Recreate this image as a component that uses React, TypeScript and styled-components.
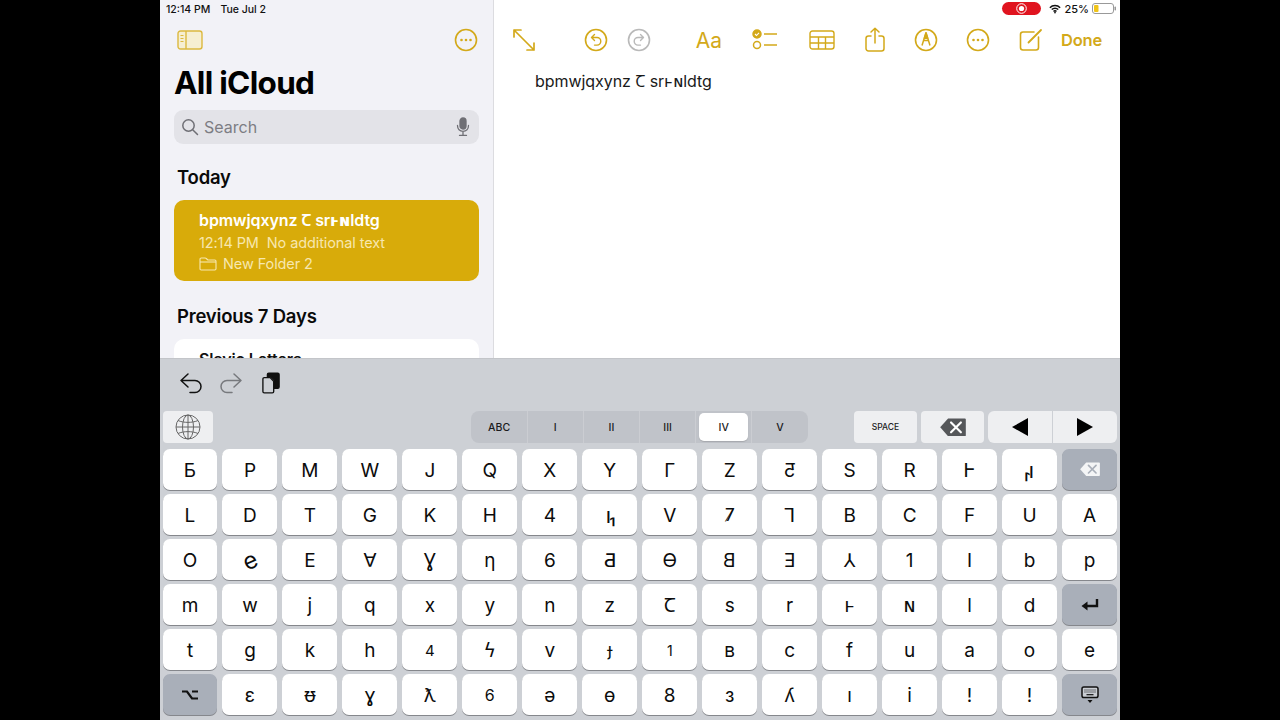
import React from 'react';
import styled, {createGlobalStyle} from 'styled-components';

const GOLD = '#d3a91a';

const GlobalStyle = createGlobalStyle`
  html, body {
    margin: 0;
    padding: 0;
    background: #000;
  }
  body {
    font-family: Inter, "DejaVu Sans", "Noto Sans", sans-serif;
  }
`

const Screen = styled.div`
  width: 960px;
  height: 720px;
  margin: 0 auto;
  display: flex;
  flex-direction: column;
  overflow: hidden;
  background: #fff;
`

const Top = styled.div`
  height: 358px;
  display: flex;
  overflow: hidden;
`

const Sidebar = styled.div`
  width: 305px;
  flex-shrink: 0;
  padding: 0 14px;
  background: #f2f2f7;
  border-right: 1px solid #dcdce0;
`

const StatusLeft = styled.div`
  height: 17px;
  padding-top: 1px;
  box-sizing: border-box;
  margin-left: -8px;
  display: flex;
  gap: 10px;
  align-items: center;
  font-size: 10.5px;
  font-weight: 500;
  color: #111;
`

const SideTools = styled.div`
  height: 30px;
  margin-top: 8px;
  padding: 0 1px 0 3px;
  display: flex;
  align-items: center;
  justify-content: space-between;
`

const Title = styled.h1`
  margin: 9px 0 0 0;
  font-size: 31.5px;
  line-height: 38px;
  font-weight: 700;
  letter-spacing: -0.7px;
  color: #000;
`

const SearchBar = styled.div`
  height: 34px;
  margin-top: 8px;
  padding: 0 9px 0 7px;
  display: flex;
  align-items: center;
  gap: 5px;
  border-radius: 9px;
  background: #e3e3e8;
  color: #7d7d83;
  font-size: 16px;
`

const SearchLabel = styled.span`
  flex: 1;
`

const SectionTitle = styled.h2<{$top: number}>`
  margin: ${p => p.$top}px 0 0 3px;
  font-size: 18.5px;
  line-height: 24px;
  font-weight: 600;
  letter-spacing: -0.2px;
  color: #0a0a0a;
`

const NoteCard = styled.div<{$active?: boolean}>`
  margin-top: 11px;
  padding: 10px 25px 0;
  height: 81px;
  box-sizing: border-box;
  border-radius: 10px;
  background: ${p => (p.$active ? '#d8ab0a' : '#fff')};
  color: ${p => (p.$active ? '#fff' : '#111')};
`

const NoteTitle = styled.div`
  font-size: 16px;
  line-height: 20px;
  font-weight: 600;
  letter-spacing: -0.1px;
  white-space: nowrap;
`

const NoteMeta = styled.div`
  margin-top: 4px;
  display: flex;
  align-items: center;
  font-size: 14.5px;
  line-height: 18px;
  color: #f7e7ae;
  letter-spacing: -0.1px;
`

const FolderLine = styled(NoteMeta)`
  margin-top: 3px;
  gap: 6px;
`

const Editor = styled.div`
  flex: 1;
  background: #fff;
`

const StatusRight = styled.div`
  height: 17px;
  padding-right: 4px;
  display: flex;
  align-items: center;
  justify-content: flex-end;
  font-size: 11px;
  font-weight: 500;
  color: #111;
`

const RecordPill = styled.div`
  width: 39px;
  height: 13px;
  margin-right: 8px;
  display: flex;
  align-items: center;
  justify-content: center;
  border-radius: 7px;
  background: #e0141f;
`

const BatteryLabel = styled.span`
  margin: 0 3px 0 3px;
`

const EditorTools = styled.div`
  height: 30px;
  margin-top: 8px;
  padding-left: 10px;
  display: flex;
  align-items: center;
`

const Tool = styled.div<{$ml: number}>`
  width: 40px;
  height: 30px;
  flex-shrink: 0;
  margin-left: ${p => p.$ml}px;
  display: flex;
  align-items: center;
  justify-content: center;
`

const AaLabel = styled.span`
  font-size: 21px;
  font-weight: 400;
  color: ${GOLD};
`

const DoneLabel = styled.span`
  margin-left: 10px;
  font-size: 16.5px;
  font-weight: 600;
  letter-spacing: -0.2px;
  color: ${GOLD};
`

const NoteBody = styled.div`
  margin: 16px 0 0 41px;
  font-size: 16px;
  line-height: 20px;
  letter-spacing: -0.05px;
  color: #1a1a1a;
  white-space: nowrap;
`

const Flip = styled.span`
  display: inline-block;
  transform: scaleX(-1);
`

const Tilt = styled.span`
  display: inline-block;
  transform: rotate(-24deg);
`

const Tight = styled.span`
  letter-spacing: -2px;
`

const Keyboard = styled.div`
  flex: 1;
  padding: 0 3px 0 2.5px;
  background: #cdd0d5;
  box-shadow: inset 0 1px 0 #c3c5c9;
`

const AccessoryBar = styled.div`
  height: 53px;
  padding: 0 0 4px 16px;
  box-sizing: border-box;
  display: flex;
  align-items: center;
  gap: 16px;
`

const PasteSvg = styled.svg`
  margin-left: 3px;
`

const FunctionRow = styled.div`
  height: 32px;
  display: flex;
  align-items: stretch;
`

const FnKey = styled.div<{$w: number}>`
  width: ${p => p.$w}px;
  display: flex;
  align-items: center;
  justify-content: center;
  border-radius: 4px;
  background: #eeeff1;
  font-size: 8.5px;
  font-weight: 500;
  color: #222;
`

const Segmented = styled.div`
  width: 337px;
  margin-left: 258px;
  display: grid;
  grid-template-columns: repeat(6, 1fr);
  border-radius: 8px;
  background: #c0c3c9;
`

const SegmentCell = styled.div<{$first?: boolean}>`
  display: flex;
  padding: 2px 3px;
  border-left: 1px solid ${p => (p.$first ? 'transparent' : '#cbcdd2')};
`

const Segment = styled.div<{$selected?: boolean}>`
  flex: 1;
  display: flex;
  align-items: center;
  justify-content: center;
  border-radius: 5px;
  font-size: 10.5px;
  font-weight: 500;
  color: #1b1b1d;
  background: ${p => (p.$selected ? '#fff' : 'transparent')};
  box-shadow: ${p => (p.$selected ? '0 1px 1px #a6a8ad' : 'none')};
`

const SpaceGroup = styled.div`
  margin-left: auto;
  display: flex;
  gap: 4px;
`

const ArrowPair = styled.div`
  width: 129px;
  display: grid;
  grid-template-columns: 1fr 1fr;
  gap: 1px;
  border-radius: 6px;
  overflow: hidden;
  background: #cdd0d5;
`

const ArrowKey = styled.div`
  display: flex;
  align-items: center;
  justify-content: center;
  background: #eeeff1;
`

const KeyGrid = styled.div`
  margin-top: 6px;
  display: grid;
  grid-template-columns: repeat(16, 1fr);
  grid-auto-rows: 41px;
  gap: 4px 5px;
`

const Key = styled.div<{$dark?: boolean; $size?: number}>`
  padding-top: ${p => (p.$dark ? 0 : 1)}px;
  box-sizing: border-box;
  display: flex;
  align-items: center;
  justify-content: center;
  border-radius: 7px;
  font-size: ${p => p.$size || 19}px;
  color: #0c0c0c;
  background: ${p => (p.$dark ? '#a9afb9' : '#fff')};
  box-shadow: 0 1px 0 #85878c;
`

const Ellipsis = ({color = GOLD}: {color?: string}) => (
    <svg width="24" height="24" viewBox="0 0 24 24">
        <circle cx="12" cy="12" r="10.5" fill="none" stroke={color} strokeWidth="1.6"/>
        <circle cx="7.5" cy="12" r="1.3" fill={color}/>
        <circle cx="12" cy="12" r="1.3" fill={color}/>
        <circle cx="16.5" cy="12" r="1.3" fill={color}/>
    </svg>
)

const SidebarIcon = () => (
    <svg width="26" height="20" viewBox="0 0 26 20" fill="none" stroke="#dcb93f" strokeWidth="1.4">
        <rect x="1" y="1" width="24" height="18" rx="2.5" fill="#f6efd2"/>
        <path d="M9 1v18" />
        <path d="M3.5 5.5h3M3.5 8.5h3M3.5 11.5h3" strokeWidth="1.1"/>
    </svg>
)

const SearchIcon = () => (
    <svg width="18" height="18" viewBox="0 0 18 18" fill="none" stroke="#6f6f75" strokeWidth="1.5">
        <circle cx="7.5" cy="7.5" r="5.7"/>
        <path d="M11.7 11.7L16.5 16.5" strokeLinecap="round"/>
    </svg>
)

const MicIcon = () => (
    <svg width="14" height="20" viewBox="0 0 14 20" fill="none" stroke="#6f6f75" strokeWidth="1.3">
        <rect x="4" y="1" width="6" height="11" rx="3" fill="#6f6f75"/>
        <path d="M1.5 8.5c0 3.5 2.3 5.8 5.5 5.8s5.5-2.3 5.5-5.8M7 14.3V18M3.5 18.4h7" strokeLinecap="round"/>
    </svg>
)

const FolderIcon = () => (
    <svg width="18" height="14" viewBox="0 0 18 14" fill="none" stroke="#f7e7ae" strokeWidth="1.1">
        <path d="M1 3V2.2C1 1.5 1.5 1 2.2 1h4c.5 0 .8.2 1.1.5l1 1c.3.3.6.5 1 .5h6.5C16.5 3 17 3.5 17 4.2v7.6c0 .7-.5 1.2-1.2 1.2H2.2C1.5 13 1 12.5 1 11.8V3z"/>
        <path d="M1 5h16"/>
    </svg>
)

const ExpandIcon = () => (
    <svg width="24" height="24" viewBox="0 0 24 24" fill="none" stroke={GOLD} strokeWidth="1.7" strokeLinecap="round" strokeLinejoin="round">
        <path d="M2 9V2h7M2 2l20 20M22 15v7h-7"/>
    </svg>
)

const CircleArrow = ({color, redo}: {color: string; redo?: boolean}) => (
    <svg width="24" height="24" viewBox="0 0 24 24" fill="none" stroke={color} strokeWidth="1.6" strokeLinecap="round" strokeLinejoin="round">
        <circle cx="12" cy="12" r="10.5"/>
        <g transform={redo ? 'matrix(-1 0 0 1 24 0)' : undefined}>
            <path d="M10.5 6.5L7.5 9.5l3 3M7.5 9.5h5.5a3.8 3.8 0 0 1 0 7.6h-2.5" strokeWidth="1.4"/>
        </g>
    </svg>
)

const ChecklistIcon = () => (
    <svg width="26" height="22" viewBox="0 0 26 22" fill="none" stroke={GOLD} strokeWidth="1.5">
        <circle cx="5" cy="5" r="4" fill={GOLD}/>
        <path d="M3 5l1.5 1.5L7 3.8" stroke="#fff" strokeWidth="1.1"/>
        <circle cx="5" cy="16" r="3.5"/>
        <path d="M12 5h13M12 16h13"/>
    </svg>
)

const TableIcon = () => (
    <svg width="26" height="20" viewBox="0 0 26 20" fill="none" stroke={GOLD} strokeWidth="1.4">
        <rect x="1" y="1" width="24" height="18" rx="2.5"/>
        <path d="M1 7h24M1 13h24M9.5 7v12M16.5 7v12"/>
    </svg>
)

const ShareIcon = () => (
    <svg width="20" height="26" viewBox="0 0 20 26" fill="none" stroke={GOLD} strokeWidth="1.5" strokeLinecap="round" strokeLinejoin="round">
        <path d="M6 9H3.5A2.5 2.5 0 0 0 1 11.5v10A2.5 2.5 0 0 0 3.5 24h13a2.5 2.5 0 0 0 2.5-2.5v-10A2.5 2.5 0 0 0 16.5 9H14"/>
        <path d="M10 16V1.5M6 5l4-3.8L14 5"/>
    </svg>
)

const PenIcon = () => (
    <svg width="24" height="24" viewBox="0 0 24 24" fill="none" stroke={GOLD} strokeWidth="1.6" strokeLinejoin="round">
        <circle cx="12" cy="12" r="10.5"/>
        <path d="M12 4.5L8 17.5M12 4.5l4 13M9.5 12.5h5" strokeWidth="1.5"/>
        <path d="M12 4.5l-2 6h4z" fill={GOLD} strokeWidth="1"/>
    </svg>
)

const ComposeIcon = () => (
    <svg width="24" height="24" viewBox="0 0 24 24" fill="none" stroke={GOLD} strokeWidth="1.6" strokeLinecap="round">
        <path d="M15 4H4a2.5 2.5 0 0 0-2.5 2.5v13A2.5 2.5 0 0 0 4 22h13a2.5 2.5 0 0 0 2.5-2.5V9"/>
        <path d="M9.5 14.5L22 2" strokeWidth="1.8"/>
    </svg>
)

const WifiIcon = () => (
    <svg width="12" height="10" viewBox="0 0 14 11" fill="none" stroke="#111" strokeWidth="1.7">
        <path d="M1 4a8.5 8.5 0 0 1 12 0M3.2 6.2a5.3 5.3 0 0 1 7.6 0M5.3 8.3a2.3 2.3 0 0 1 3.4 0"/>
        <circle cx="7" cy="9.7" r="1" fill="#111" stroke="none"/>
    </svg>
)

const BatteryIcon = () => (
    <svg width="24" height="11" viewBox="0 0 24 11">
        <rect x="0.5" y="0.5" width="21" height="10" rx="2.5" fill="none" stroke="#999"/>
        <rect x="2" y="2" width="4.5" height="7" rx="1" fill="#f0c419"/>
        <rect x="22.5" y="3.5" width="1.5" height="4" rx="0.7" fill="#999"/>
    </svg>
)

const RecordIcon = () => (
    <svg width="11" height="11" viewBox="0 0 11 11">
        <circle cx="5.5" cy="5.5" r="4.8" fill="none" stroke="#fff" strokeWidth="1"/>
        <circle cx="5.5" cy="5.5" r="2.6" fill="#fff"/>
    </svg>
)

const BarUndo = ({color, redo}: {color: string; redo?: boolean}) => (
    <svg width="24" height="22" viewBox="0 0 24 22" fill="none" stroke={color} strokeWidth="1.5" strokeLinecap="round" strokeLinejoin="round">
        <g transform={redo ? 'matrix(-1 0 0 1 24 0)' : undefined}>
            <path d="M9 2L2 8.5 9 15M2 8.5h14a6 6 0 0 1 0 12h-5"/>
        </g>
    </svg>
)

const PasteIcon = () => (
    <PasteSvg width="18" height="22" viewBox="0 0 20 24" fill="none" stroke="#111" strokeWidth="1.5" strokeLinejoin="round">
        <path d="M6 2.5A1.5 1.5 0 0 1 7.5 1h10A1.5 1.5 0 0 1 19 2.5v14a1.5 1.5 0 0 1-1.5 1.5H14V9l-4-4H6z" fill="#111"/>
        <path d="M2.5 6H9l4 4v11.5a1.5 1.5 0 0 1-1.5 1.5h-9A1.5 1.5 0 0 1 1 21.5v-14A1.5 1.5 0 0 1 2.5 6z" fill="#cdd0d5"/>
    </PasteSvg>
)

const GlobeIcon = () => (
    <svg width="26" height="26" viewBox="0 0 26 26" fill="none" stroke="#666" strokeWidth="1">
        <circle cx="13" cy="13" r="12"/>
        <ellipse cx="13" cy="13" rx="5.5" ry="12"/>
        <path d="M13 1v24M1 13h24M3 6.5c5.5 2.5 14.5 2.5 20 0M3 19.5c5.5-2.5 14.5-2.5 20 0"/>
    </svg>
)

const DeleteIcon = ({fill, cross, width}: {fill: string; cross: string; width: number}) => (
    <svg width={width} height={width * 0.72} viewBox="0 0 26 19">
        <path d="M8 0.5h17a1 1 0 0 1 1 1v16a1 1 0 0 1-1 1H8L0 9.5z" fill={fill}/>
        <path d="M11 4.5l10 10M21 4.5l-10 10" stroke={cross} strokeWidth="2.2" strokeLinecap="round"/>
    </svg>
)

const Triangle = ({left}: {left?: boolean}) => (
    <svg width="16" height="18" viewBox="0 0 16 18">
        <path d={left ? 'M16 0v18L0 9z' : 'M0 0v18l16-9z'} fill="#000"/>
    </svg>
)

const ReturnIcon = () => (
    <svg width="18" height="12" viewBox="0 0 18 12" fill="none" stroke="#111" strokeWidth="2.4">
        <path d="M16 0v7H5"/>
        <path d="M0.5 7L6.5 2.5v9z" fill="#111" stroke="none"/>
    </svg>
)

const OptionIcon = () => (
    <svg width="16" height="10" viewBox="0 0 16 10" fill="none" stroke="#111" strokeWidth="2.2">
        <path d="M0 1.5h5l5 7h6M10 1.5h6"/>
    </svg>
)

const HideKeyboardIcon = () => (
    <svg width="18" height="18" viewBox="0 0 18 18" fill="none" stroke="#111" strokeWidth="1.5">
        <rect x="1" y="1" width="16" height="10.5" rx="1.8" fill="#c9cdd3"/>
        <path d="M3.5 4h11M3.5 6h11" strokeDasharray="1 1" strokeWidth="1.2"/>
        <path d="M5.5 8.7h7" strokeWidth="1.2"/>
        <path d="M6.5 14h5L9 17z" fill="#111" stroke="none"/>
    </svg>
)

type KeyDef = React.ReactNode | {node: React.ReactNode; size: number} | {icon: React.ReactNode}

const STEP_UP = <Tight>ı₁</Tight>

const KEYS: KeyDef[] = [
    'Б', 'P', 'M', 'W', 'J', 'Q', 'X', 'Y', 'Γ', 'Z', <Flip>Ƽ</Flip>, 'S', 'R', 'Ⱶ', {node: <Flip>{STEP_UP}</Flip>, size: 22},
    {icon: <DeleteIcon fill="#f4f5f6" cross="#a9afb9" width={20}/>},
    'L', 'D', 'T', 'G', 'K', 'H', '4', {node: STEP_UP, size: 22}, 'V', {node: '7̸', size: 17}, '⅂', 'B', 'C', 'F', 'U', 'A',
    'O', {node: <Tilt>e</Tilt>, size: 24}, 'E', '∀', 'Ɣ', 'ƞ', '6', 'Ƌ', 'Ө', <Flip>B</Flip>, 'Ǝ', '⅄', '1', 'I', 'b', 'p',
    'm', 'w', 'j', 'q', 'x', 'y', 'n', 'z', 'Ꞇ', 's', 'r', 'ⱶ', 'ɴ', 'l', 'd',
    {icon: <ReturnIcon/>},
    't', 'g', 'k', 'h', {node: '4', size: 15}, 'ϟ', 'v', {node: 'ɟ', size: 17}, {node: '1', size: 14}, 'ʙ', 'c', 'f', 'u', 'a', 'o', 'e',
    {icon: <OptionIcon/>},
    'ɛ', 'ᵿ', 'ɣ', 'ƛ', {node: '6', size: 16}, 'ə', 'ɵ', '8', 'з', 'ʎ', 'ı', 'i', '!', '!',
    {icon: <HideKeyboardIcon/>},
]

const renderKey = (def: KeyDef, index: number) => {
    if (def && typeof def === 'object' && 'icon' in def) {
        return <Key key={index} $dark>{def.icon}</Key>
    }
    if (def && typeof def === 'object' && 'size' in def) {
        return <Key key={index} $size={def.size}>{def.node}</Key>
    }
    return <Key key={index}>{def as React.ReactNode}</Key>
}

const SEGMENTS = ['ABC', 'I', 'II', 'III', 'IV', 'V']

const NoteText = () => <>bpmwjqxynz Ꞇ srⱶɴldtg</>

const App = () => {
    return (
        <Screen>
            <GlobalStyle/>
            <Top>
                <Sidebar>
                    <StatusLeft><span>12:14 PM</span><span>Tue Jul 2</span></StatusLeft>
                    <SideTools>
                        <SidebarIcon/>
                        <Ellipsis/>
                    </SideTools>
                    <Title>All iCloud</Title>
                    <SearchBar>
                        <SearchIcon/>
                        <SearchLabel>Search</SearchLabel>
                        <MicIcon/>
                    </SearchBar>
                    <SectionTitle $top={21}>Today</SectionTitle>
                    <NoteCard $active>
                        <NoteTitle><NoteText/></NoteTitle>
                        <NoteMeta>12:14 PM&nbsp;&nbsp;No additional text</NoteMeta>
                        <FolderLine><FolderIcon/>New Folder 2</FolderLine>
                    </NoteCard>
                    <SectionTitle $top={23}>Previous 7 Days</SectionTitle>
                    <NoteCard>
                        <NoteTitle>Slavic Letters</NoteTitle>
                    </NoteCard>
                </Sidebar>
                <Editor>
                    <StatusRight>
                        <RecordPill><RecordIcon/></RecordPill>
                        <WifiIcon/>
                        <BatteryLabel>25%</BatteryLabel>
                        <BatteryIcon/>
                    </StatusRight>
                    <EditorTools>
                        <Tool $ml={0}><ExpandIcon/></Tool>
                        <Tool $ml={32}><CircleArrow color={GOLD}/></Tool>
                        <Tool $ml={3}><CircleArrow color="#b9b9b9" redo/></Tool>
                        <Tool $ml={30}><AaLabel>Aa</AaLabel></Tool>
                        <Tool $ml={16}><ChecklistIcon/></Tool>
                        <Tool $ml={17}><TableIcon/></Tool>
                        <Tool $ml={13}><ShareIcon/></Tool>
                        <Tool $ml={11}><PenIcon/></Tool>
                        <Tool $ml={12}><Ellipsis/></Tool>
                        <Tool $ml={13}><ComposeIcon/></Tool>
                        <DoneLabel>Done</DoneLabel>
                    </EditorTools>
                    <NoteBody><NoteText/></NoteBody>
                </Editor>
            </Top>
            <Keyboard>
                <AccessoryBar>
                    <BarUndo color="#111"/>
                    <BarUndo color="#77797d" redo/>
                    <PasteIcon/>
                </AccessoryBar>
                <FunctionRow>
                    <FnKey $w={50}><GlobeIcon/></FnKey>
                    <Segmented>
                        {SEGMENTS.map((label, i) =>
                            <SegmentCell key={label} $first={i === 0}>
                                <Segment $selected={label === 'IV'}>{label}</Segment>
                            </SegmentCell>
                        )}
                    </Segmented>
                    <SpaceGroup>
                        <FnKey $w={63}>SPACE</FnKey>
                        <FnKey $w={63}><DeleteIcon fill="#55575a" cross="#fff" width={26}/></FnKey>
                        <ArrowPair>
                            <ArrowKey><Triangle left/></ArrowKey>
                            <ArrowKey><Triangle/></ArrowKey>
                        </ArrowPair>
                    </SpaceGroup>
                </FunctionRow>
                <KeyGrid>
                    {KEYS.map(renderKey)}
                </KeyGrid>
            </Keyboard>
        </Screen>
    );
};

export default App;
